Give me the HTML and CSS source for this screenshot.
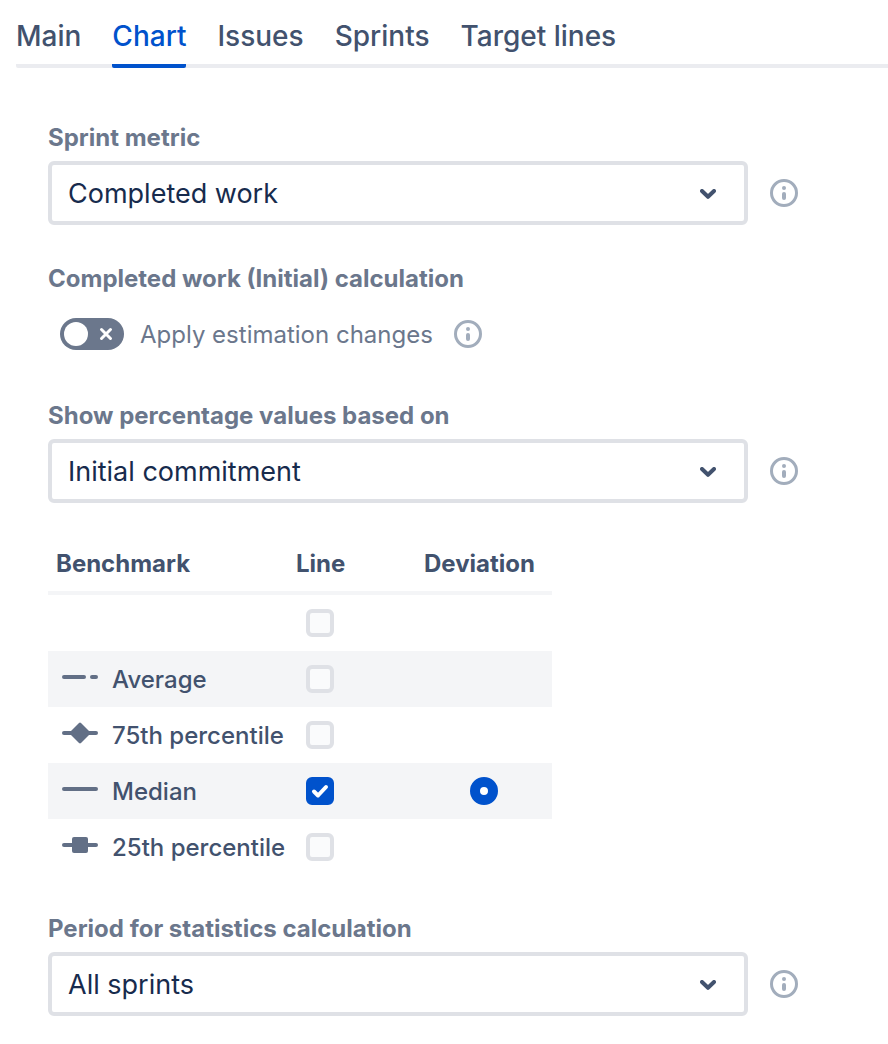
FILE: index.html
```html
<!DOCTYPE html>
<html lang="en">
<head>
    <meta charset="UTF-8">
    <meta name="viewport" content="width=device-width, initial-scale=1.0">
    <title>Chart settings</title>
    <link rel="stylesheet" href="styles.css">
</head>
<body>
    <!-- shared icons -->
    <svg class="sprite" aria-hidden="true">
        <symbol id="icon-info" viewBox="0 0 28 28">
            <circle cx="14" cy="14" r="12.5" fill="none" stroke="#a2adbc" stroke-width="3"/>
            <circle cx="14" cy="9" r="2" fill="#a2adbc"/>
            <rect x="12" y="13" width="4" height="8" rx="2" fill="#a2adbc"/>
        </symbol>
        <symbol id="icon-chevron" viewBox="0 0 16 10">
            <path d="M2 2l6 5.8L14 2" fill="none" stroke="#42526e" stroke-width="4" stroke-linecap="round" stroke-linejoin="round"/>
        </symbol>
    </svg>

    <nav class="tabs">
        <a class="tab" href="#main">Main</a>
        <a class="tab active" href="#chart" aria-current="page">Chart</a>
        <a class="tab" href="#issues">Issues</a>
        <a class="tab" href="#sprints">Sprints</a>
        <a class="tab" href="#target-lines">Target lines</a>
    </nav>

    <form class="panel">
        <div class="field">
            <label class="field-label" for="metric">Sprint metric</label>
            <div class="field-row">
                <div class="select-wrap">
                    <select class="select" id="metric">
                        <option>Completed work</option>
                    </select>
                    <svg class="chevron" aria-hidden="true"><use href="#icon-chevron"/></svg>
                </div>
                <button class="info" type="button" aria-label="About sprint metric"><svg class="info-icon"><use href="#icon-info"/></svg></button>
            </div>
        </div>

        <div class="field toggle-field" role="group" aria-labelledby="calcLabel">
            <div class="field-label" id="calcLabel">Completed work (Initial) calculation</div>
            <div class="toggle-row">
                <span class="toggle-wrap">
                    <input class="toggle" type="checkbox" id="estimation">
                    <svg class="toggle-cross" viewBox="0 0 14 14" aria-hidden="true">
                        <path d="M2.5 2.5l9 9M11.5 2.5l-9 9" stroke="#fff" stroke-width="3" stroke-linecap="round"/>
                    </svg>
                </span>
                <label class="toggle-label" for="estimation">Apply estimation changes</label>
                <button class="info" type="button" aria-label="About estimation changes"><svg class="info-icon"><use href="#icon-info"/></svg></button>
            </div>
        </div>

        <div class="field">
            <label class="field-label" for="basis">Show percentage values based on</label>
            <div class="field-row">
                <div class="select-wrap">
                    <select class="select" id="basis">
                        <option>Initial commitment</option>
                    </select>
                    <svg class="chevron" aria-hidden="true"><use href="#icon-chevron"/></svg>
                </div>
                <button class="info" type="button" aria-label="About percentage values"><svg class="info-icon"><use href="#icon-info"/></svg></button>
            </div>
        </div>

        <table class="benchmarks">
            <thead>
                <tr>
                    <th class="col-name" scope="col">Benchmark</th>
                    <th class="col-line" scope="col">Line</th>
                    <th class="col-deviation" scope="col">Deviation</th>
                </tr>
            </thead>
            <tbody>
                <tr>
                    <td></td>
                    <td><input class="check" type="checkbox" aria-label="All lines"></td>
                    <td></td>
                </tr>
                <tr>
                    <td>
                        <label class="name" for="average">
                            <svg class="mark" viewBox="0 0 36 22" aria-hidden="true"><path d="M2 11h20M30 11h4"/></svg>
                            Average
                        </label>
                    </td>
                    <td><input class="check" type="checkbox" id="average"></td>
                    <td></td>
                </tr>
                <tr>
                    <td>
                        <label class="name" for="p75">
                            <svg class="mark" viewBox="0 0 36 22" aria-hidden="true"><path d="M2 11h32"/><path class="shape" d="M17 .9q1-.8 2 0l9 9q1 1.1 0 2.2l-9 9q-1 .8-2 0l-9-9q-1-1.1 0-2.2z"/></svg>
                            75th percentile
                        </label>
                    </td>
                    <td><input class="check" type="checkbox" id="p75"></td>
                    <td></td>
                </tr>
                <tr>
                    <td>
                        <label class="name" for="median">
                            <svg class="mark" viewBox="0 0 36 22" aria-hidden="true"><path d="M2 11h32"/></svg>
                            Median
                        </label>
                    </td>
                    <td><input class="check" type="checkbox" id="median" checked></td>
                    <td><input class="radio" type="radio" name="deviation" aria-label="Median deviation" checked></td>
                </tr>
                <tr>
                    <td>
                        <label class="name" for="p25">
                            <svg class="mark" viewBox="0 0 36 22" aria-hidden="true"><path d="M2 11h32"/><rect class="shape" x="10" y="3" width="16" height="16" rx="2"/></svg>
                            25th percentile
                        </label>
                    </td>
                    <td><input class="check" type="checkbox" id="p25"></td>
                    <td></td>
                </tr>
            </tbody>
        </table>

        <div class="field">
            <label class="field-label" for="period">Period for statistics calculation</label>
            <div class="field-row">
                <div class="select-wrap">
                    <select class="select" id="period">
                        <option>All sprints</option>
                    </select>
                    <svg class="chevron" aria-hidden="true"><use href="#icon-chevron"/></svg>
                </div>
                <button class="info" type="button" aria-label="About statistics period"><svg class="info-icon"><use href="#icon-info"/></svg></button>
            </div>
        </div>
    </form>
</body>
</html>
```

FILE: styles.css
```css
* {
    box-sizing: border-box;
}
body {
    margin: 0;
    background: #fff;
    color: #42526e;
    font-family: Inter, "Liberation Sans", sans-serif;
    font-size: 24px;
}
.sprite {
    display: none;
}

/* Tabs */
.tabs {
    display: flex;
    gap: 31px;
    margin-left: 16px;
    padding-top: 16px;
    background: linear-gradient(#ebecf0, #ebecf0) bottom / 100% 4px no-repeat;
    border-bottom-left-radius: 2px;
}
.tab {
    padding-bottom: 8px;
    border-bottom: 4px solid transparent;
    color: #42526e;
    font-size: 28px;
    font-weight: 500;
    line-height: 40px;
    text-decoration: none;
    white-space: nowrap;
}
.tab.active {
    color: #0052cc;
    background: linear-gradient(#0052cc, #0052cc) bottom / 100% 4px no-repeat border-box;
    border-radius: 2px;
}

/* Form */
.panel {
    padding: 53px 90px 28px 48px;
}
.field {
    margin-bottom: 37px;
}
.field:last-child {
    margin-bottom: 0;
}
.field-label {
    display: block;
    padding-bottom: 6px;
    color: #6b778c;
    font-weight: 700;
    line-height: 34px;
}
.field-row {
    display: flex;
    align-items: center;
    gap: 22px;
}
.select-wrap {
    position: relative;
    flex: 1;
}
.select {
    display: block;
    width: 100%;
    height: 64px;
    padding: 0 56px 0 16px;
    border: 4px solid #dfe1e6;
    border-radius: 6px;
    background: #fff;
    color: #172b4d;
    font: 400 27px Inter, "Liberation Sans", sans-serif;
    appearance: none;
}
.chevron {
    position: absolute;
    top: 28px;
    right: 32px;
    width: 16px;
    height: 10px;
    pointer-events: none;
}
.info {
    display: block;
    padding: 0;
    border: none;
    background: none;
    cursor: pointer;
}
.info-icon {
    display: block;
    width: 28px;
    height: 28px;
}

/* Toggle */
.toggle-field {
    margin-bottom: 49px;
}
.toggle-row {
    display: flex;
    align-items: center;
    padding: 16px 0 0 12px;
}
.toggle-wrap {
    position: relative;
    display: block;
}
.toggle {
    display: flex;
    align-items: center;
    width: 64px;
    height: 32px;
    margin: 0;
    padding: 4px;
    border-radius: 16px;
    background: #6b778c;
    appearance: none;
}
.toggle::before {
    content: "";
    width: 24px;
    height: 24px;
    border-radius: 50%;
    background: #fff;
}
.toggle:checked {
    justify-content: flex-end;
    background: #36b37e;
}
.toggle:checked + .toggle-cross {
    display: none;
}
.toggle-cross {
    position: absolute;
    top: 9px;
    right: 11px;
    width: 14px;
    height: 14px;
    pointer-events: none;
}
.toggle-label {
    margin: 0 21px 0 16px;
    padding-top: 2px;
    color: #6b778c;
    line-height: 30px;
}

/* Benchmark table */
.benchmarks {
    width: 504px;
    margin: -5px 0 37px;
    border-spacing: 0;
    table-layout: fixed;
}
.benchmarks th {
    height: 60px;
    padding: 0 8px;
    border-bottom: 4px solid #f4f5f7;
    font-weight: 700;
    text-align: left;
}
.benchmarks td {
    height: 56px;
    padding: 0;
    font-weight: 500;
}
.benchmarks tbody tr:nth-child(even) {
    background: #f4f5f7;
}
.col-name {
    width: 240px;
}
.col-line {
    width: 128px;
}
.name {
    display: flex;
    align-items: center;
    gap: 14px;
    padding: 2px 0 0 14px;
    line-height: 32px;
    white-space: nowrap;
}
.mark {
    flex: none;
    width: 36px;
    height: 22px;
    margin-bottom: 6px;
    fill: none;
    stroke: #626f86;
    stroke-width: 4;
    stroke-linecap: round;
}
.mark .shape {
    fill: #626f86;
    stroke: none;
}
.check {
    display: block;
    width: 28px;
    height: 28px;
    margin: 0 18px;
    border: 4px solid #dfe1e6;
    border-radius: 6px;
    background: #fafbfc;
    appearance: none;
}
.check:checked {
    border-color: #0052cc;
    background: #0052cc;
}
.check:checked::before {
    content: "";
    display: block;
    width: 20px;
    height: 20px;
    background: url("data:image/svg+xml,%3Csvg xmlns='http://www.w3.org/2000/svg' viewBox='0 0 20 20'%3E%3Cpath d='M4 10.5l4 4L16 6' fill='none' stroke='%23fff' stroke-width='4' stroke-linecap='round' stroke-linejoin='round'/%3E%3C/svg%3E");
}
.radio {
    display: block;
    width: 28px;
    height: 28px;
    margin: 0 auto;
    border: 4px solid #dfe1e6;
    border-radius: 50%;
    background: #fafbfc;
    appearance: none;
}
.radio:checked {
    border: 10px solid #0052cc;
    background: #fff;
}
```
